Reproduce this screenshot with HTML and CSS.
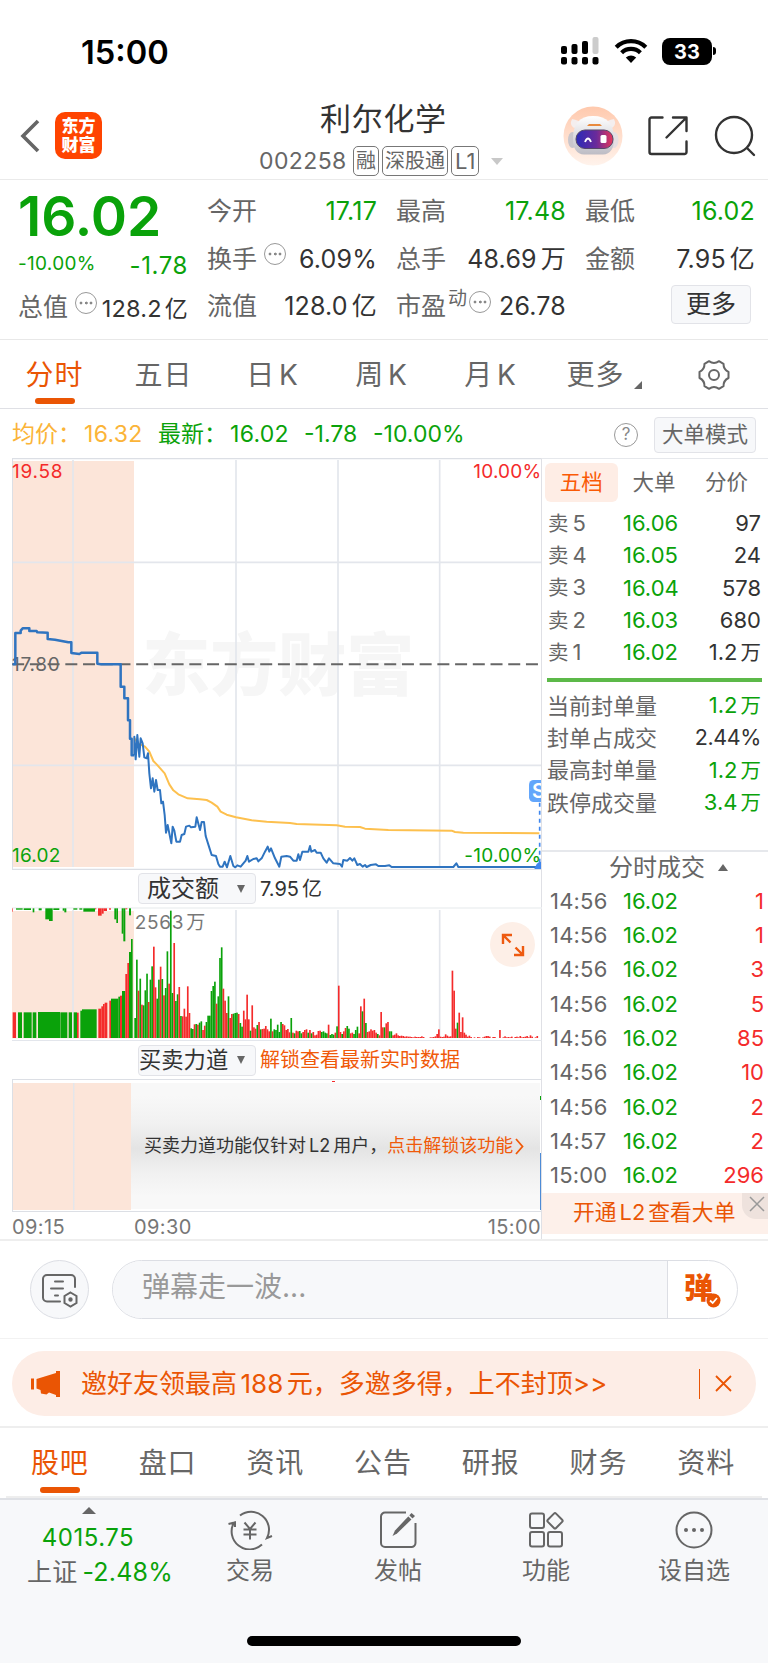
FILE: index.html
```html
<!DOCTYPE html>
<html lang="zh-CN">
<head>
  <meta charset="UTF-8">
  <title>利尔化学 002258</title>
  <link rel="stylesheet" href="styles.css">
</head>
<body>

  <div class="status-bar">
    <span class="clock">15:00</span>
    <svg class="signal" width="40" height="28" viewBox="0 0 40 28">
      <rect x="1" y="9" width="6" height="8" rx="2"/><rect x="11.500" y="7" width="6" height="10" rx="2"/><rect x="22" y="4" width="6" height="13" rx="2"/><rect x="32.500" y="0" width="6" height="17" rx="2" fill="#ccc"/>
      <rect x="1" y="20" width="6" height="7.500" rx="2"/><rect x="11.500" y="20" width="6" height="7.500" rx="2"/><rect x="22" y="20" width="6" height="7.500" rx="2"/><rect x="32.500" y="20" width="6" height="7.500" rx="2"/>
    </svg>
    <svg class="wifi" width="34" height="26" viewBox="0 0 34 26" fill="none" stroke="#000" stroke-width="4.200">
      <path d="M2.200 9.200 A21 21 0 0 1 31.800 9.200"/><path d="M7.600 14.800 A13.400 13.400 0 0 1 26.400 14.800"/>
      <path d="M17 25 L11.800 19.600 Q17 15.400 22.200 19.600 Z" fill="#000" stroke="none"/>
    </svg>
    <span class="battery">33</span><i class="battery-tip"></i>
  </div>

  <div class="nav">
    <svg class="back" width="22" height="36" viewBox="0 0 22 36"><path d="M19 3 L4 18 L19 33" fill="none" stroke="#666" stroke-width="3.600"/></svg>
    <div class="logo">东方<br>财富</div>
    <div class="stock">
      <h1>利尔化学</h1>
      <div class="stock-code"><span class="code">002258</span><span class="tag">融</span><span class="tag">深股通</span><span class="tag tag-l1">L1</span><i class="caret"></i></div>
    </div>
    <svg class="robot" width="60" height="60" viewBox="0 0 60 60">
      <defs>
        <linearGradient id="halo" x1="0" y1="0" x2="0" y2="1"><stop offset="0" stop-color="#ffc9ad"/><stop offset="1" stop-color="#fff3ec"/></linearGradient>
        <linearGradient id="face" x1="0" y1="0" x2="1" y2="0"><stop offset="0" stop-color="#2b2bb8"/><stop offset=".55" stop-color="#6a2a9a"/><stop offset="1" stop-color="#e8365a"/></linearGradient>
        <linearGradient id="shell" x1="0" y1="0" x2="0" y2="1"><stop offset="0" stop-color="#fff"/><stop offset="1" stop-color="#bdbcc4"/></linearGradient>
      </defs>
      <circle cx="30" cy="30" r="29.500" fill="url(#halo)"/>
      <path d="M11 22 Q6 19 9 13 Q16 14 18 18 M49 22 Q54 19 51 13 Q44 14 42 18" fill="#f4eeee"/>
      <ellipse cx="9.500" cy="34" rx="4.500" ry="8" fill="#c9c6cc"/><ellipse cx="51" cy="34" rx="4.500" ry="8" fill="#e6dfe2"/>
      <path d="M10 33 Q10 10 30 10 Q51 10 51 33 Q51 48 40 48.500 L21 48.500 Q10 48 10 33Z" fill="url(#shell)"/>
      <rect x="13" y="24" width="37" height="18.500" rx="9" fill="url(#face)" stroke="#56486a"/>
      <path d="M22 36 Q25 29 28 36" fill="none" stroke="#fff" stroke-width="1.800"/><rect x="37.500" y="29" width="6" height="8" rx="1.500" fill="#fff"/>
      <path d="M24 20 L26 18 H37 L39 20Z" fill="#e8893d"/>
    </svg>
    <svg class="share" width="42" height="42" viewBox="0 0 42 42" fill="none" stroke="#333" stroke-width="2.400" stroke-linecap="round" stroke-linejoin="round">
      <path d="M15.500 2.500 H4.500 A2 2 0 0 0 2.500 4.500 V37 A2 2 0 0 0 4.500 39 H37 A2 2 0 0 0 39.500 37 V26.500"/><path d="M26 2.500 H39.500 V16 M39 3 L19.500 22.500"/>
    </svg>
    <svg class="search" width="44" height="44" viewBox="0 0 44 44" fill="none" stroke="#333" stroke-width="2.400" stroke-linecap="round"><circle cx="21" cy="21" r="18"/><path d="M34 34 L41 41"/></svg>
  </div>

  <div class="quote">
    <div class="quote-col">
      <div class="last-price">16.02</div>
      <div class="change"><small>-10.00%</small><span>-1.78</span></div>
      <div class="cell cell-cap"><span>总值</span><i class="dots"></i><b>128.2<em>亿</em></b></div>
    </div>
    <div class="quote-col">
      <div class="cell"><span>今开</span><b class="down">17.17</b></div>
      <div class="cell"><span>换手</span><i class="dots"></i><b>6.09%</b></div>
      <div class="cell"><span>流值</span><b>128.0<em>亿</em></b></div>
    </div>
    <div class="quote-col">
      <div class="cell"><span>最高</span><b class="down">17.48</b></div>
      <div class="cell"><span>总手</span><b>48.69<em>万</em></b></div>
      <div class="cell cell-pe"><span>市盈</span><sup>动</sup><i class="dots"></i><b>26.78</b></div>
    </div>
    <div class="quote-col">
      <div class="cell"><span>最低</span><b class="down">16.02</b></div>
      <div class="cell"><span>金额</span><b>7.95<em>亿</em></b></div>
      <div class="cell"><button class="btn more-btn">更多</button></div>
    </div>
  </div>

  <div class="period-tabs">
    <div class="tab active">分时</div>
    <div class="tab">五日</div>
    <div class="tab">日<em>K</em></div>
    <div class="tab">周<em>K</em></div>
    <div class="tab">月<em>K</em></div>
    <div class="tab tab-more">更多<i class="corner"></i></div>
    <div class="tab">
      <svg width="34" height="34" viewBox="0 0 34 34" fill="none" stroke="#666" stroke-width="2"><circle cx="17" cy="17" r="5"/>
        <path stroke-linejoin="round" d="M12 3.200 Q17 6.600 22 3.200 L26.500 5.800 Q26.400 11.600 31.500 14 V20 Q26.400 22.400 26.500 28.200 L22 30.800 Q17 27.400 12 30.800 L7.500 28.200 Q7.600 22.400 2.500 20 V14 Q7.600 11.600 7.500 5.800 Z"/></svg>
    </div>
  </div>

  <div class="summary">
    <span class="avg label">均价：</span><span class="avg num">16.32</span>
    <span class="down label">最新：</span><span class="down num">16.02</span><span class="down chg">-1.78</span><span class="down">-10.00%</span>
    <i class="help">?</i>
    <button class="btn mode-btn">大单模式</button>
  </div>

  <div class="board">
    <div class="charts">
      <!-- price line; drawing units are a third of a pixel -->
      <svg class="price-chart" viewBox="36 144 1590 1236">
        <rect x="36" y="153" width="366" height="1218" fill="#fce5d9"/>
        <text x="427" y="840" class="watermark">东方财富</text>
        <path d="M219 150V1371M708 150V1371M1014 150V1371M1319 150V1371" stroke="#e3e6ec" stroke-width="5"/>
        <path d="M36 457H1626M36 1066H1626" stroke="#e3e6ec" stroke-width="5"/>
        <path d="M36 146H1626M37 146V1378M36 1378H1626" fill="none" stroke="#dcdfe5" stroke-width="4"/>
        <text x="36" y="782" class="axis wide" fill="#666">17.80</text>
        <path d="M36.500 763H1614" stroke="#666" stroke-width="6" stroke-dasharray="36 17.150"/>
        <text x="36" y="205" class="axis wide up">19.58</text>
        <text x="1624" y="205" class="axis up end">10.00%</text>
        <text x="36" y="1356" class="axis low">16.02</text>
        <text x="1624" y="1356" class="axis low end">-10.00%</text>
        <polyline class="avg-line" points="403,985 415,1000 435,1010 448,1025 460,1053 470,1063 494,1090 508,1123 520,1141 535,1153 563,1165 600,1168 620,1170 635,1178 652,1190 662,1205 680,1214 708,1222 755,1231 800,1235 870,1239 890,1242 1010,1246 1035,1250 1080,1251 1095,1256 1165,1260 1355,1262 1365,1266 1390,1268 1618,1270"/>
        <polyline class="price-line pre" points="38,763 46,763 46,669 62,669 62,662 68,655 88,655 88,663 110,663 112,667 143,668 143,687 165,689 185,693 205,697 214,697 214,729 238,732 245,728 292,728 292,761 302,763 362,763 362,830 373,830 373,865 384,865 384,931 390,931 390,986 395,986 395,1036 403,1036"/>
        <polyline class="price-line" points="403,1036 403,980 407,1048 412,975 418,1040 422,985 428,1000 433,1042 440,1045 444,1030 448,1090 453,1135 458,1105 463,1145 468,1110 473,1140 480,1140 484,1180 489,1175 494,1215 498,1268 503,1245 508,1270 514,1300 518,1250 523,1262 529,1295 540,1295 545,1275 553,1272 558,1250 568,1247 573,1252 586,1250 590,1222 600,1260 605,1236 612,1236 617,1278 627,1310 635,1335 648,1338 655,1362 660,1370 668,1370 674,1355 681,1372 691,1338 700,1368 706,1372 712,1366 722,1370 737,1352 742,1338 747,1355 760,1347 770,1345 775,1354 785,1345 795,1325 803,1310 808,1325 813,1315 825,1345 838,1370 844,1340 860,1338 870,1340 880,1352 890,1352 895,1333 900,1350 907,1325 925,1325 930,1308 934,1325 945,1320 950,1328 962,1328 970,1345 980,1358 987,1345 1000,1360 1020,1362 1026,1370 1030,1350 1042,1352 1050,1344 1057,1352 1063,1345 1072,1365 1080,1362 1088,1370 1095,1365 1100,1371 1112,1365 1128,1363 1135,1368 1155,1368 1168,1366 1175,1371 1360,1371 1369,1360 1375,1371 1620,1371"/>
        <path d="M1619 1178V1362" stroke="#3f86ee" stroke-width="5" stroke-dasharray="12 12"/>
        <rect x="1587" y="1110" width="66" height="66" rx="14" fill="#63a6fb"/>
        <text x="1596" y="1165" class="sell-mark">S</text>
        <path d="M1603 1377 L1610 1362 Q1618 1354 1626 1356 V1377Z" fill="#3f86ee"/>
      </svg>

      <div class="indicator"><button class="btn pick">成交额<i></i></button><span>7.95<em>亿</em></span></div>

      <div class="pane">
        <svg id="volume-chart" viewBox="36 141 1590 399">
          <rect x="36" y="153" width="366" height="382" fill="#fce5d9"/>
          <path d="M219 150V535M708 150V535M1014 150V535M1319 150V535" stroke="#e3e6ec" stroke-width="5"/>
          <path d="M36 144H1626" stroke="#eef0f2" stroke-width="5"/>
          <text x="404" y="208" class="axis wide" fill="#777">2563<tspan dx="6">万</tspan></text>
          <g id="bars"></g>
        </svg>
        <div class="expand"><svg width="24" height="24" viewBox="0 0 24 24" fill="none" stroke="#ee5a10" stroke-width="2.400"><path d="M11 2 H2 V11 M2.500 2.500 L9.500 9.500 M22 13 V22 H13 M14.500 14.500 L21.500 21.500"/></svg></div>
      </div>

      <div class="indicator force"><button class="btn pick tight">买卖力道<i></i></button><span class="accent">解锁查看最新实时数据</span></div>

      <div class="lock-pane">
        <div class="lock-msg">买卖力道功能仅针对<em>L2</em>用户，<span class="accent">点击解锁该功能</span><svg width="9" height="17" viewBox="0 0 9 17"><path d="M1 1 L7.500 8.500 L1 16" fill="none" stroke="#f05a0a" stroke-width="1.800"/></svg></div>
      </div>

      <div class="times"><span>09:15</span><span>09:30</span><span class="close-time">15:00</span></div>
    </div>

    <div class="orders">
      <div class="order-tabs"><span class="on">五档</span><span>大单</span><span>分价</span></div>
      <div class="asks">
        <div class="ask"><span>卖<em>5</em></span><b>16.06</b><i>97</i></div>
        <div class="ask"><span>卖<em>4</em></span><b>16.05</b><i>24</i></div>
        <div class="ask"><span>卖<em>3</em></span><b>16.04</b><i>578</i></div>
        <div class="ask"><span>卖<em>2</em></span><b>16.03</b><i>680</i></div>
        <div class="ask"><span>卖<em>1</em></span><b>16.02</b><i>1.2<em>万</em></i></div>
      </div>
      <div class="ratio"></div>
      <div class="stats">
        <div><span>当前封单量</span><b class="down">1.2<em>万</em></b></div>
        <div><span>封单占成交</span><b class="percent">2.44%</b></div>
        <div><span>最高封单量</span><b class="down">1.2<em>万</em></b></div>
        <div><span>跌停成交量</span><b class="down">3.4<em>万</em></b></div>
      </div>
      <div class="deal-head">分时成交<i></i></div>
      <div class="deals">
        <div class="deal"><span>14:56</span><b>16.02</b><i>1</i></div>
        <div class="deal"><span>14:56</span><b>16.02</b><i>1</i></div>
        <div class="deal"><span>14:56</span><b>16.02</b><i>3</i></div>
        <div class="deal"><span>14:56</span><b>16.02</b><i>5</i></div>
        <div class="deal"><span>14:56</span><b>16.02</b><i>85</i></div>
        <div class="deal"><span>14:56</span><b>16.02</b><i>10</i></div>
        <div class="deal"><span>14:56</span><b>16.02</b><i>2</i></div>
        <div class="deal"><span>14:57</span><b>16.02</b><i>2</i></div>
        <div class="deal"><span>15:00</span><b>16.02</b><i>296</i></div>
      </div>
      <div class="l2-banner">开通<em>L2</em>查看大单
        <div class="l2-close"><svg width="16" height="16" viewBox="0 0 16 16"><path d="M1 1 L15 15 M15 1 L1 15" stroke="#999" stroke-width="1.500"/></svg></div>
      </div>
    </div>
  </div>

  <div class="danmu">
    <div class="danmu-set">
      <svg width="40" height="36" viewBox="0 0 40 36" fill="none" stroke="#666" stroke-width="2" stroke-linecap="round">
        <path d="M19 28.500 H6 A4 4 0 0 1 2 24.500 V6 A4 4 0 0 1 6 2 H30 A4 4 0 0 1 34 6 V14"/><path d="M14 8.500 H22 M10 15.500 H22 M14 22.500 H17"/>
        <path d="M29.500 19.500 L35.500 23 V30 L29.500 33.500 L23.500 30 V23 Z"/><circle cx="29.500" cy="26.500" r="1.200" fill="#666"/>
      </svg>
    </div>
    <div class="danmu-box">
      <div class="danmu-input">弹幕走一波...</div>
      <div class="danmu-toggle">弹<svg class="tick" width="15" height="15" viewBox="0 0 15 15"><circle cx="7.500" cy="7.500" r="7" fill="#ea5504"/><path d="M4 7.500 L6.700 10 L11 5" fill="none" stroke="#fff" stroke-width="1.800"/></svg></div>
    </div>
  </div>

  <div class="promo-wrap">
    <div class="promo">
      <svg width="32" height="28" viewBox="0 0 32 28" fill="#ea5504"><path d="M1 8.500 H4 V19.500 H1Z M6.500 9 L26 3 V1 H30 V27 H26 V25 L19 22.500 L16.500 24.500 L11 23.500 L10.500 20 L6.500 18.500Z"/></svg>
      <span class="promo-text">邀好友领最高<em>188</em>元，多邀多得，上不封顶&gt;&gt;</span>
      <i class="bar"></i>
      <svg width="17" height="17" viewBox="0 0 17 17"><path d="M1 1 L16 16 M16 1 L1 16" stroke="#ea5504" stroke-width="1.800"/></svg>
    </div>
  </div>

  <div class="info-tabs">
    <div class="tab active">股吧</div>
    <div class="tab">盘口</div>
    <div class="tab">资讯</div>
    <div class="tab">公告</div>
    <div class="tab">研报</div>
    <div class="tab">财务</div>
    <div class="tab">资料</div>
  </div>

  <div class="bottom">
    <div class="index">
      <i></i>
      <div class="down">4015.75</div>
      <div>上证<span class="down">-2.48%</span></div>
    </div>
    <div class="action">
      <svg width="46" height="40" viewBox="0 0 46 40" fill="none" stroke="#666" stroke-width="2">
        <path d="M13 5.500 A18 18 0 0 1 40 28 L45 26"/><path d="M35 34.500 A18 18 0 0 1 7 12.500 L1.500 14 M8 17 V11.500"/>
        <path d="M17.500 12.500 L23 19 L28.500 12.500 M23 19 V29.500 M16.500 19.500 H29.500 M16.500 24.500 H29.500"/>
      </svg>
      <span>交易</span>
    </div>
    <div class="action">
      <svg width="40" height="40" viewBox="0 0 40 40" fill="none" stroke="#666" stroke-width="2">
        <path d="M28 2.500 H7 A4 4 0 0 0 3 6.500 V33 A4 4 0 0 0 7 37 H33 A4 4 0 0 0 37.500 33 V13"/>
        <path d="M33.500 3 L37 6 L19 23.500 L14.500 26 L17 20.500Z" fill="#666" stroke="none"/><path d="M30 5 L35 10" stroke="#f7f8fa" stroke-width="1.500"/>
      </svg>
      <span>发帖</span>
    </div>
    <div class="action">
      <svg width="38" height="40" viewBox="0 0 38 40" fill="none" stroke="#666" stroke-width="2">
        <rect x="3" y="3.500" width="14" height="14.500" rx="2"/><rect x="3" y="22" width="14" height="14.500" rx="2"/><rect x="21" y="22" width="14" height="14.500" rx="2"/><rect x="22.200" y="5" width="11.600" height="11.600" rx="1.500" transform="rotate(45 28 10.800)"/>
      </svg>
      <span>功能</span>
    </div>
    <div class="action">
      <svg width="40" height="40" viewBox="0 0 40 40" fill="none" stroke="#666" stroke-width="2"><circle cx="20" cy="20" r="17.500"/><g fill="#666" stroke="none"><circle cx="12" cy="20" r="2"/><circle cx="20" cy="20" r="2"/><circle cx="28" cy="20" r="2"/></g></svg>
      <span>设自选</span>
    </div>
    <div class="home-bar"></div>
  </div>

  <script src="volume.js"></script>
</body>
</html>
```
FILE: styles.css
```css
* {
  box-sizing: border-box;
}
body {
  margin: 0;
  width: 768px;
  background: #fff;
  color: #333;
  font-family: Inter, "Noto Sans CJK SC", sans-serif;
  font-size: 22px;
  line-height: 1;
}
i, em, b {
  font-style: normal;
  font-weight: normal;
}
svg {
  display: block;
  flex: none;
}
button {
  font-family: inherit;
  line-height: 1;
  padding: 0;
}
.down {
  color: #0aa20a;
}
.accent {
  color: #f05a0a;
}
.btn {
  background: #f7f8fa;
  border: 1px solid #e2e3e8;
  border-radius: 4px;
  color: #333;
  white-space: nowrap;
}

/* status bar */
.status-bar {
  display: flex;
  align-items: center;
  height: 102px;
  padding-left: 81px;
}
.clock {
  width: 479px;
  padding-top: 2px;
  color: #000;
  font-size: 32.6px;
  font-weight: 600;
}
.wifi {
  margin-left: 14px;
}
.battery {
  width: 50px;
  height: 27px;
  margin-left: 14px;
  border-radius: 8px;
  background: #000;
  color: #fff;
  font-size: 20px;
  font-weight: 700;
  line-height: 28px;
  text-align: center;
}
.battery-tip {
  width: 3px;
  height: 8px;
  margin-left: 1px;
  border-radius: 0 4px 4px 0;
  background: #000;
}

/* header */
.nav {
  display: flex;
  height: 78px;
  padding-left: 19px;
  border-bottom: 1px solid #eaeaea;
}
.back {
  margin-top: 16px;
}
.logo {
  flex: none;
  width: 47px;
  height: 47px;
  margin: 10px 0 0 14px;
  padding-top: 5px;
  border-radius: 10px;
  background: #ff4400;
  color: #fff;
  font-size: 17px;
  font-weight: 900;
  line-height: 19px;
  text-align: center;
}
.stock {
  flex: none;
  width: 453px;
  padding-left: 157px;
}
.stock h1 {
  margin: 0;
  padding-left: 61px;
  font-size: 31px;
  font-weight: 400;
  line-height: 34px;
  letter-spacing: .7px;
}
.stock-code {
  display: flex;
  align-items: center;
  margin-top: 10px;
  color: #666;
}
.code {
  width: 94px;
  font-size: 23px;
  letter-spacing: .4px;
}
.tag {
  height: 30px;
  padding: 0 2px;
  margin-right: 3px;
  border: 1px solid #777;
  border-radius: 5px;
  font-size: 20px;
  line-height: 28px;
}
.tag-l1 {
  padding: 0 3px;
  font-size: 22px;
}
.caret {
  margin-left: 9px;
  border: 6.5px solid transparent;
  border-top: 7px solid #c8c8c8;
  border-bottom: 0;
}
.robot {
  margin: 4px 0 0 8px;
}
.share {
  margin: 13px 0 0 24px;
}
.search {
  margin: 12px 0 0 24px;
}

/* quote */
.quote {
  display: grid;
  grid-template-columns: repeat(4, 170px);
  column-gap: 19px;
  height: 160px;
  padding: 8px 0 0 18px;
  border-bottom: 1px solid #e8e8e8;
}
.last-price {
  height: 56px;
  color: #0aa20a;
  font-size: 55px;
  font-weight: 600;
  line-height: 56px;
  letter-spacing: 0;
}
.change {
  display: flex;
  justify-content: space-between;
  height: 40px;
  padding-top: 9px;
  color: #0aa20a;
  font-size: 24px;
  letter-spacing: .6px;
}
.change small {
  margin-top: 1px;
  font-size: 19px;
  letter-spacing: .3px;
}
.change span {
  margin-top: 1px;
}
.cell {
  display: flex;
  align-items: center;
  height: 47.5px;
  font-size: 25px;
  white-space: nowrap;
}
.cell span {
  color: #666;
}
.cell b {
  margin-left: auto;
  letter-spacing: .2px;
}
.cell b em {
  margin-left: 4px;
}
.cell-cap b {
  font-size: 23.5px;
  margin-top: 3px;
}
.cell-cap b em {
  margin-left: 3px;
  font-size: 23px;
}
.cell sup {
  color: #666;
  font-size: 19px;
  margin: -16px 0 0 2px;
  vertical-align: baseline;
}
.dots {
  width: 22px;
  height: 22px;
  margin: -10px 0 0 7px;
  border: 1.5px solid #999;
  border-radius: 50%;
  background: radial-gradient(circle, #888 1.2px, transparent 1.7px) center / 4.5px 4px no-repeat,
    radial-gradient(circle, #888 1.2px, transparent 1.7px) 2.5px center / 4px 4px no-repeat,
    radial-gradient(circle, #888 1.2px, transparent 1.7px) 12.5px center / 4px 4px no-repeat;
}
.cell-pe .dots {
  margin-left: 2px;
}
.more-btn {
  width: 80px;
  height: 39px;
  margin: -4px 0 0 86px;
  font-size: 25px;
}

/* tabs */
.period-tabs, .info-tabs {
  display: flex;
  font-size: 28px;
  color: #666;
  letter-spacing: .9px;
}
.tab {
  flex: 1;
  display: flex;
  align-items: center;
  justify-content: center;
  position: relative;
}
.tab em {
  margin-left: 4px;
}
.tab.active {
  color: #ea5504;
}
.tab.active::after {
  content: "";
  position: absolute;
  bottom: 4px;
  width: 40px;
  height: 6px;
  border-radius: 3px;
  background: #ea5504;
}
.period-tabs {
  height: 69px;
  padding-top: 1px;
  border-bottom: 1px solid #dfe0e5;
}
.tab-more {
  padding-left: 5px;
}
.corner {
  margin: 21px 0 0 10px;
  border: 4px solid #666;
  border-top-color: transparent;
  border-left-color: transparent;
}

/* summary line */
.summary {
  display: flex;
  align-items: center;
  height: 49px;
  padding: 2px 0 0 12px;
  font-size: 23px;
  white-space: nowrap;
}
.avg {
  color: #fbb438;
}
.summary .label {
  width: 72px;
}
.summary .num {
  width: 74px;
  letter-spacing: .3px;
}
.summary .chg {
  width: 69px;
}
.help {
  width: 24px;
  height: 24px;
  margin-left: auto;
  border: 1.5px solid #999;
  border-radius: 50%;
  color: #888;
  font-size: 17px;
  line-height: 21px;
  text-align: center;
}
.mode-btn {
  width: 102px;
  height: 36px;
  margin: 0 12px 0 16px;
  font-size: 21.5px;
  color: #666;
}

.board {
  display: flex;
  height: 783px;
  border-bottom: 2px solid #eee;
}

/* charts */
.charts {
  width: 541px;
  padding-left: 12px;
}
.price-chart {
  width: 530px;
  height: 412px;
}
.axis {
  font-size: 57px;
  letter-spacing: .6px;
}
.wide {
  letter-spacing: 2.2px;
}
.up {
  fill: #f42b2b;
}
.low {
  fill: #0aa20a;
}
.end {
  text-anchor: end;
}
.watermark {
  fill: #f6f6f6;
  font-size: 204px;
  font-weight: 900;
}
.avg-line, .price-line {
  fill: none;
  stroke: #fdc04e;
  stroke-width: 6;
  stroke-linejoin: round;
}
.price-line {
  stroke: #2f74c0;
}
.pre {
  stroke-width: 7.5;
}
.sell-mark {
  fill: #fff;
  font-size: 60px;
  font-weight: 600;
}
.indicator {
  display: flex;
  align-items: center;
  height: 37px;
  padding-left: 126px;
  font-size: 20px;
}
.indicator span em {
  margin-left: 3px;
}
.pick {
  display: flex;
  align-items: center;
  justify-content: space-between;
  width: 118px;
  height: 31px;
  margin-right: 4px;
  padding: 0 10px 0 8px;
  font-size: 24px;
}
.pick i {
  border: 4.5px solid transparent;
  border-top: 8px solid #666;
  border-bottom: 0;
}
.pick.tight {
  padding-left: 0;
  font-size: 22.3px;
}
.pane {
  position: relative;
  width: 530px;
  height: 134px;
  border-bottom: 1px solid #e3e6ec;
}
#volume-chart {
  width: 530px;
  height: 133px;
}
.expand {
  position: absolute;
  top: 15px;
  right: 7px;
  display: flex;
  align-items: center;
  justify-content: center;
  width: 45px;
  height: 45px;
  border-radius: 50%;
  background: #fdefe7;
}
.force {
  height: 38px;
}
.lock-pane {
  display: flex;
  width: 530px;
  height: 133px;
  padding: 3px 0 2px 118px;
  border: 1px solid #dcdfe5;
  border-width: 1px 0 1px 1px;
  background: linear-gradient(#e4e6ea, #e4e6ea) 60px 3px / 1.5px 127px no-repeat,
    linear-gradient(#fce5d9, #fce5d9) 0 3px / 118px 127px no-repeat,
    linear-gradient(#f42b2b, #f42b2b) 319px 1px / 3px 1px no-repeat,
    linear-gradient(#0aa20a, #0aa20a) 527px 16px / 1px 4px no-repeat,
    linear-gradient(#4d8bd6, #4d8bd6) 527px 73px / 2px 57px no-repeat;
}
.lock-msg {
  display: flex;
  align-items: center;
  width: 409px;
  padding-left: 13px;
  background: linear-gradient(#f8f8f8 10%, #f1f1f1 32%, #e4e4e4 52%, #f1f1f1 72%, #f8f8f8 90%);
  font-size: 18px;
  white-space: nowrap;
}
.lock-msg em {
  margin: 0 3px;
}
.lock-msg svg {
  margin-left: 2px;
}
.times {
  display: flex;
  padding-top: 4px;
  color: #777;
  font-size: 20px;
  line-height: 22px;
  letter-spacing: .4px;
}
.times span {
  width: 122px;
}
.times .close-time {
  width: auto;
  margin-left: auto;
}

/* order book */
.orders {
  width: 227px;
  border-left: 1px solid #dfe0e5;
  border-top: 1px solid #e6e8ec;
  color: #333;
  font-size: 22px;
}
.order-tabs {
  display: flex;
  height: 47px;
  padding: 4px 0 0 3px;
  color: #666;
  font-size: 21.5px;
}
.order-tabs span {
  width: 72.6px;
  height: 39px;
  border-radius: 6px;
  line-height: 39px;
  text-align: center;
}
.order-tabs .on {
  background: #feede5;
  color: #fa5a05;
}
.asks {
  padding-top: 1px;
}
.ask {
  display: grid;
  grid-template-columns: 75px 60px 1fr;
  align-items: center;
  height: 32.3px;
  padding: 0 7px 0 6px;
}
.ask span, .stats span {
  color: #666;
}
.ask span {
  font-size: 20.5px;
}
.ask span em {
  margin-left: 4px;
  font-size: 22px;
}
.ask b, .deal b {
  color: #0aa20a;
}
.ask i, .deal i {
  text-align: right;
}
.ask i em, .stats b em {
  margin-left: 3px;
  font-size: 20.5px;
}
.stats .percent {
  font-size: 21.5px;
  letter-spacing: -.4px;
}
.ratio {
  height: 4px;
  margin: 10px 6px 0 5px;
  background: #5cb949;
}
.stats {
  height: 170px;
  padding-top: 7px;
  border-bottom: 2px solid #e6e8ec;
}
.stats div {
  display: flex;
  align-items: center;
  justify-content: space-between;
  height: 32.3px;
  padding: 0 7px 0 5px;
}
.deal-head {
  display: flex;
  align-items: center;
  height: 31px;
  padding-left: 67px;
  color: #666;
  font-size: 24px;
}
.deal-head i, .index > i {
  margin-left: 13px;
  border: 5.5px solid transparent;
  border-top: 0;
  border-bottom: 7px solid #666;
}
.deal {
  display: grid;
  grid-template-columns: 73px 60px 1fr;
  align-items: center;
  height: 34.33px;
  padding: 0 4px 0 8px;
}
.deal span {
  color: #666;
  letter-spacing: .2px;
}
.deal i {
  color: #f42b2b;
}
.l2-banner {
  position: relative;
  height: 41px;
  padding-left: 31px;
  margin-top: 1px;
  background: #fdf0ea;
  color: #ea5504;
  font-size: 21.8px;
  line-height: 39px;
}
.l2-banner em {
  margin: 0 3px;
}
.l2-close {
  position: absolute;
  top: 0;
  right: 0;
  width: 26px;
  height: 26px;
  padding: 3px 0 0 7px;
  border-radius: 0 0 0 14px;
  background: #eee2dd;
}

/* bullet comments */
.danmu {
  display: flex;
  align-items: center;
  height: 98px;
  padding-left: 30px;
  border-bottom: 1px solid #f2f2f2;
}
.danmu-set {
  display: flex;
  align-items: center;
  justify-content: center;
  width: 59px;
  height: 59px;
  padding-left: 3px;
  padding-top: 3px;
  border: 1px solid #dcdee4;
  border-radius: 50%;
  background: #f7f8fa;
}
.danmu-box {
  display: flex;
  width: 626px;
  height: 59px;
  margin-left: 23px;
  border: 1px solid #dcdee4;
  border-radius: 30px;
  overflow: hidden;
}
.danmu-input {
  width: 555px;
  padding-left: 29px;
  border-right: 1px solid #dcdee4;
  background: #f7f8fa;
  color: #999;
  font-size: 28px;
  line-height: 53px;
}
.danmu-toggle {
  position: relative;
  padding-left: 16px;
  color: #ea5504;
  font-size: 29px;
  font-weight: 900;
  line-height: 56px;
}
.tick {
  position: absolute;
  left: 38px;
  top: 32px;
}

/* promo strip */
.promo-wrap {
  height: 89px;
  padding: 12px 12px 0;
  border-bottom: 2px solid #eee;
}
.promo {
  display: flex;
  align-items: center;
  height: 65px;
  padding: 0 24px 0 18px;
  border-radius: 33px;
  background: #fdede6;
  color: #ea5504;
  font-size: 26px;
  white-space: nowrap;
}
.promo-text {
  margin-left: 19px;
}
.promo-text em {
  margin: 0 3.5px;
}
.bar {
  width: 1px;
  height: 30px;
  margin: 0 15px 0 auto;
  background: #ea5504;
}
.info-tabs {
  height: 70px;
  margin: 0 6px;
  padding: 2px 2px 0 0;
  border-bottom: 2px solid #eee;
}
.info-tabs .tab.active::after {
  bottom: 3px;
}

/* bottom bar */
.bottom {
  display: grid;
  grid-template-columns: 176px repeat(4, 148px);
  grid-template-rows: 136px 1fr;
  height: 165px;
  border-top: 2px solid #dfe1e6;
  background: #f7f8fa;
  color: #666;
}
.index {
  display: flex;
  flex-direction: column;
  align-items: center;
  padding: 7px 0 0 24px;
  font-size: 25px;
}
.index > i {
  margin: 0 0 11px -22px;
  border-width: 0 7px 7px;
}
.index div {
  height: 35px;
  line-height: 25px;
  white-space: nowrap;
  letter-spacing: .2px;
}
.index > .down {
  font-size: 24px;
  margin-left: -24px;
  letter-spacing: .5px;
}
.index span {
  margin-left: 5px;
}
.action {
  display: flex;
  flex-direction: column;
  align-items: center;
  padding-top: 10px;
  font-size: 24px;
}
.action span {
  margin-top: 9px;
}
.home-bar {
  grid-column: 1 / -1;
  width: 274px;
  height: 10px;
  margin-left: 247px;
  border-radius: 5px;
  background: #000;
}
```
FILE: volume.js
```js
// continuous trading: one bar a minute, colour + height
const minutes = "G60 G235 R142 G178 R100 G98 G143 G193 R108 G175 G215 R274 R152 G118 G175 R214 G177 R128 G150 G260 R163 G382 G135 R285 G111 G131 R153 G66 R65 R88 R64 R155 R75 G29 G27 R41 G42 R40 G46 G50 R24 R37 G48 G67 G67 G141 G156 G169 R103 G125 G240 G272 R148 R112 R75 G125 R60 R72 G73 G75 G76 R72 G45 G34 R82 R56 R130 R56 G22 R98 R32 R28 G39 R48 G26 R27 R28 R36 R26 R20 G58 R20 G26 G24 G40 G18 G48 R42 R38 R24 R27 R17 G60 R16 G14 R22 R20 G21 G14 R18 R24 R26 G16 R24 G14 R18 R8 R10 R21 R22 G18 G20 G16 G14 R40 G9 G12 G10 R16 G35 R157 R18 G12 R20 R30 G36 G28 R14 R16 G12 G24 G34 R14 R95 G80 R118 G45 R18 R20 R26 R22 R24 R16 G12 R8 R78 R32 G32 R44 R48 G20 G20 R8 R10 R14 R8 R6 R7 R6 R4 R5 R4 R4 R3 R2 R4 R3 R3 R3 R5 R3 R0 R0 R0 R2 R2 R3 R5 R12 R26 R4 R3 R4 R11 R7 R4 R5 R202 R142 R28 G46 R76 R18 R62 R16 R10 R4 R7 R3 R0 R2 R0 R3 R2 R0 R2 R4 R6 R6 R4 R0 R3 R3 R0 R0 R24 R0 R2 R5 R2 R3 R2 R4 R0 R3 R4 R2 R6 R2 R3 R4 R6 R2 R8 R4 R0 R2 R6".split(" ");

// call auction: x, width, height, colour
const auction = [
  [38, 10, 77, "R"], [54, 12, 77, "G"], [71, 24, 77, "G"], [98, 11, 77, "G"], [114, 66, 78, "G"],
  [181, 21, 77, "G"], [206, 10, 77, "G"], [221, 10, 77, "G"], [231, 5, 76, "R"], [241, 5, 82, "G"],
  [246, 44, 86, "G"], [295, 9, 88, "R"], [304, 5, 95, "R"], [309, 5, 102, "R"], [314, 8, 106, "R"],
  [328, 5, 112, "R"], [333, 22, 118, "G"], [355, 5, 124, "G"], [360, 6, 127, "R"], [366, 10, 141, "G"],
  [376, 6, 192, "R"], [382, 5, 225, "R"], [387, 6, 258, "G"], [393, 5, 297, "G"]
];

// unmatched volume, hanging from the top edge
const unmatched = [
  [37, 2, 10, "R"], [48, 20, 4, "G"], [71, 22, 5, "G"], [98, 5, 12, "G"], [116, 9, 6, "G"], [136, 11, 33, "G"],
  [147, 11, 38, "G"], [160, 18, 5, "G"], [188, 5, 7, "G"], [193, 6, 12, "G"], [220, 12, 4, "G"],
  [238, 9, 4, "G"], [250, 35, 10, "G"], [285, 4, 3, "R"], [294, 11, 22, "R"], [305, 6, 16, "R"],
  [311, 10, 8, "R"], [327, 6, 4, "R"], [343, 6, 33, "G"], [349, 5, 44, "G"], [365, 5, 76, "G"],
  [370, 6, 99, "G"], [376, 6, 3, "R"], [387, 6, 21, "G"]
];

const colors = { R: "#f42b2b", G: "#0aa20a" };
const base = 534;
let svg = "";

function bar(x, y, w, h, c) {
  if (h > 0) svg += `<rect x="${x}" y="${y}" width="${w}" height="${h}" fill="${colors[c]}"/>`;
}

auction.forEach(([x, w, h, c]) => bar(x, base - h, w, h, c));
unmatched.forEach(([x, w, h, c]) => bar(x, 145, w, h, c));
minutes.forEach((m, i) => {
  const h = Number(m.slice(1));
  bar((403 + i * 5.09).toFixed(1), base - h, 5, h, m[0]);
});

document.getElementById("bars").innerHTML = svg;
```
